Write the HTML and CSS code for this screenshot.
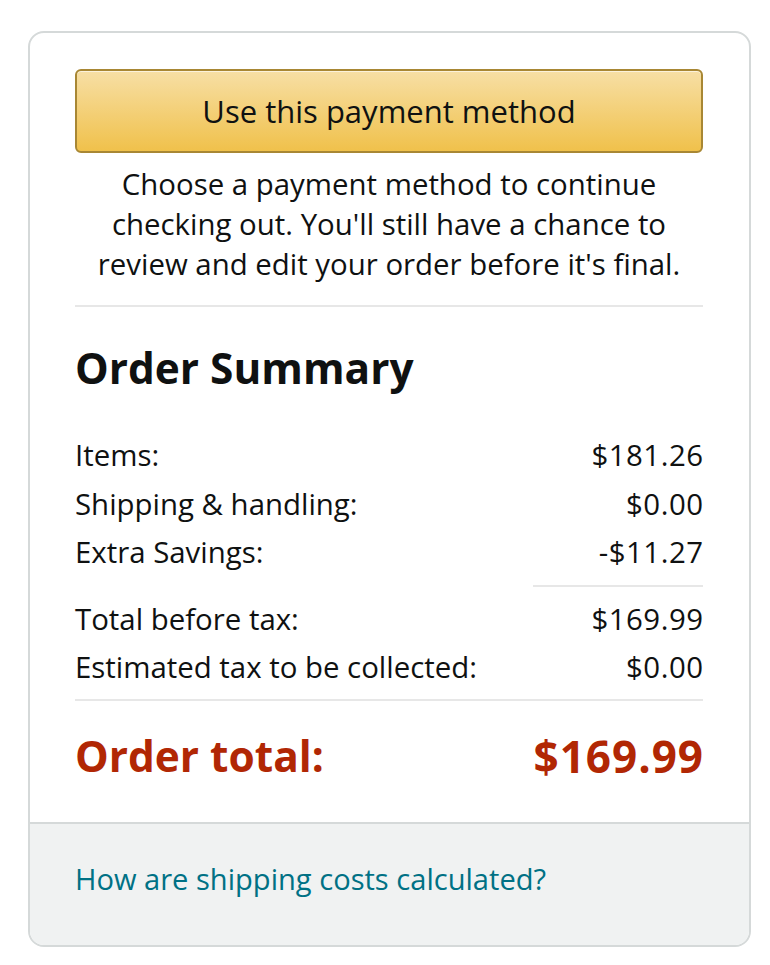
FILE: index.html
```html
<!DOCTYPE html>
<html>
<head>
<meta charset="utf-8">
<link rel="stylesheet" href="styles.css">
</head>
<body>
<div class="card">
  <div class="main">
    <button class="pay-btn">Use this payment method</button>
    <p class="note">Choose a payment method to continue checking out. You'll still have a chance to review and edit your order before it's final.</p>
    <hr class="rule">
    <h3 class="title">Order Summary</h3>
    <div class="rows">
      <div class="row"><span>Items:</span><span class="amt">$181.26</span></div>
      <div class="row"><span>Shipping &amp; handling:</span><span class="amt">$0.00</span></div>
      <div class="row"><span>Extra Savings:</span><span class="amt">-$11.27</span></div>
      <div class="subrule"></div>
      <div class="row"><span>Total before tax:</span><span class="amt">$169.99</span></div>
      <div class="row"><span>Estimated tax to be collected:</span><span class="amt">$0.00</span></div>
    </div>
    <hr class="rule rule-total">
    <div class="total"><span>Order total:</span><span class="amt-total">$169.99</span></div>
  </div>
  <div class="foot">
    <a class="link" href="#">How are shipping costs calculated?</a>
  </div>
</div>
</body>
</html>
```

FILE: styles.css
```css
* { box-sizing: border-box; }
html, body { margin: 0; padding: 0; background: #fff; }
body {
  font-family: "Open Sans", "Liberation Sans", sans-serif;
  color: #0f1111;
  font-size: 29.4px;
}
.card {
  margin: 31px 0 0 28px;
  width: 723px;
  border: 2px solid #d5d9d9;
  border-radius: 16px;
  overflow: hidden;
}
.main {
  padding: 36px 46px 38px 45px;
}
.pay-btn {
  display: block;
  width: 100%;
  height: 84px;
  border: 2px solid #a88734;
  border-radius: 6px;
  background: linear-gradient(to bottom, #f7dfa5, #f0c14b);
  font-family: inherit;
  font-size: 31px;
  color: #0f1111;
  padding: 0;
  box-shadow: inset 0 1px 0 rgba(255,255,255,0.6);
}
.note {
  margin: 11px 0 0;
  text-align: center;
  line-height: 40px;
}
.rule {
  border: 0;
  height: 2px;
  background: #e7e7e7;
  margin: 21px 0 0;
}
.title {
  margin: 33px 0 0;
  font-size: 42.4px;
  font-weight: 700;
  line-height: 56px;
}
.rows { margin-top: 35px; }
.row {
  display: flex;
  justify-content: space-between;
  line-height: 48.5px;
}
.amt { letter-spacing: 0.5px; margin-right: -0.5px; }
.subrule {
  height: 2px;
  background: #e7e7e7;
  margin: 8px 0 8px auto;
  width: 170px;
}
.rule-total { margin-top: 7px; }
.total {
  display: flex;
  justify-content: space-between;
  margin-top: 27px;
  font-size: 42.4px;
  font-weight: 700;
  line-height: 56px;
  color: #b12704;
}
.amt-total { font-size: 44px; letter-spacing: 1px; margin-right: -1px; }
.foot {
  background: #f0f2f2;
  border-top: 2px solid #d5d9d9;
  padding: 35px 46px 46px 45px;
  line-height: 40px;
}
.link {
  color: #007185;
  text-decoration: none;
  font-size: 29.1px;
}
```
